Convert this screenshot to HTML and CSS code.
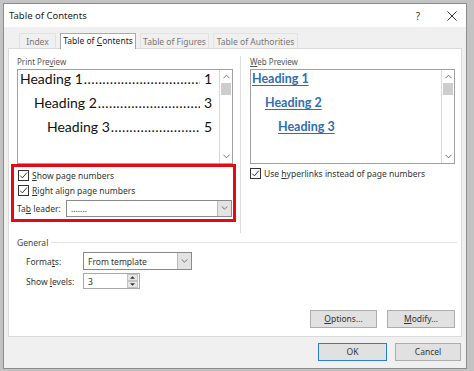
FILE: index.html
```html
<html>
    <head>
        <link rel="stylesheet" href="styles.css">
    </head>
    <body>
        <div class="window">
            <div class="titlebar">
                <span class="title">Table of Contents</span>
                <span class="help">?</span>
                <span class="close_box"><svg class="close" viewBox="0 0 10 10"><path d="M0.5 0.5 L9.5 9.5 M9.5 0.5 L0.5 9.5" stroke="#333" stroke-width="1" fill="none"/></svg></span>
            </div>
            <div class="tabs">
                <div class="tab t_index">Index</div>
                <div class="tab active t_toc">Table of <u>C</u>ontents</div>
                <div class="tab t_fig">Table of Figures</div>
                <div class="tab t_auth">Table of Authorities</div>
            </div>
            <div class="panel">
                <div class="top">
                    <div class="col left">
                        <div class="label">Print Pre<u>v</u>iew</div>
                        <div class="preview">
                            <div class="preview_body">
                                <div class="toc_line lvl1"><span>Heading 1</span><span class="leader"></span><span>1</span></div>
                                <div class="toc_line lvl2"><span>Heading 2</span><span class="leader"></span><span>3</span></div>
                                <div class="toc_line lvl3"><span>Heading 3</span><span class="leader"></span><span>5</span></div>
                            </div>
                            <div class="scrollbar">
                                <svg class="arrow" viewBox="0 0 8 5"><path d="M0.5 4.5 L4 1 L7.5 4.5" stroke="#606060" fill="none"/></svg>
                                <div class="thumb"></div>
                                <div class="spacer"></div>
                                <svg class="arrow" viewBox="0 0 8 5"><path d="M0.5 0.5 L4 4 L7.5 0.5" stroke="#606060" fill="none"/></svg>
                            </div>
                        </div>
                        <div class="highlight">
                            <div class="check_row">
                                <svg class="cb" viewBox="0 0 11 11"><rect x="0.5" y="0.5" width="10" height="10" fill="#fff" stroke="#333"/><path d="M2.2 5.6 L4.4 7.9 L8.9 2.6" fill="none" stroke="#333"/></svg>
                                <span><u>S</u>how page numbers</span>
                            </div>
                            <div class="check_row">
                                <svg class="cb" viewBox="0 0 11 11"><rect x="0.5" y="0.5" width="10" height="10" fill="#fff" stroke="#333"/><path d="M2.2 5.6 L4.4 7.9 L8.9 2.6" fill="none" stroke="#333"/></svg>
                                <span><u>R</u>ight align page numbers</span>
                            </div>
                            <div class="leader_row">
                                <span class="leader_label">Ta<u>b</u> leader:</span>
                                <div class="select leader_select">
                                    <span class="select_text">.......</span>
                                    <div class="drop"><svg viewBox="0 0 8 5"><path d="M0.5 0.5 L4 4 L7.5 0.5" stroke="#555" fill="none"/></svg></div>
                                </div>
                            </div>
                        </div>
                    </div>
                    <div class="col right">
                        <div class="label"><u>W</u>eb Preview</div>
                        <div class="preview web">
                            <div class="preview_body">
                                <div class="web_line lvl1"><span>Heading 1</span></div>
                                <div class="web_line lvl2"><span>Heading 2</span></div>
                                <div class="web_line lvl3"><span>Heading 3</span></div>
                            </div>
                            <div class="scrollbar">
                                <svg class="arrow" viewBox="0 0 8 5"><path d="M0.5 4.5 L4 1 L7.5 4.5" stroke="#606060" fill="none"/></svg>
                                <div class="thumb"></div>
                                <div class="spacer"></div>
                                <svg class="arrow" viewBox="0 0 8 5"><path d="M0.5 0.5 L4 4 L7.5 0.5" stroke="#606060" fill="none"/></svg>
                            </div>
                        </div>
                        <div class="check_row web_check">
                            <svg class="cb" viewBox="0 0 11 11"><rect x="0.5" y="0.5" width="10" height="10" fill="#fff" stroke="#333"/><path d="M2.2 5.6 L4.4 7.9 L8.9 2.6" fill="none" stroke="#333"/></svg>
                            <span>Use <u>h</u>yperlinks instead of page numbers</span>
                        </div>
                    </div>
                </div>
                <div class="general">
                    <div class="group_title"><span>General</span></div>
                    <div class="field_row">
                        <span class="field_label">Forma<u>t</u>s:</span>
                        <div class="select formats_select">
                            <span class="select_text">From template</span>
                            <div class="drop"><svg viewBox="0 0 8 5"><path d="M0.5 0.5 L4 4 L7.5 0.5" stroke="#555" fill="none"/></svg></div>
                        </div>
                    </div>
                    <div class="field_row">
                        <span class="field_label">Show <u>l</u>evels:</span>
                        <div class="spin">
                            <span class="select_text">3</span>
                            <div class="spin_btns">
                                <div class="spin_btn"><svg viewBox="0 0 6 3"><path d="M0 3 L3 0 L6 3 Z" fill="#333"/></svg></div>
                                <div class="spin_btn"><svg viewBox="0 0 6 3"><path d="M0 0 L3 3 L6 0 Z" fill="#333"/></svg></div>
                            </div>
                        </div>
                    </div>
                </div>
                <div class="panel_buttons">
                    <div class="button b_options"><u>O</u>ptions...</div>
                    <div class="button b_modify"><u>M</u>odify...</div>
                </div>
            </div>
            <div class="footer">
                <div class="button default b_ok">OK</div>
                <div class="button b_cancel">Cancel</div>
            </div>
        </div>
    </body>
</html>
```

FILE: styles.css
```css
body
{
    margin:0;
    padding:3px 0 0 3px;
    background:#c3c3c3;
    font-family:"Noto Sans","Open Sans",sans-serif;
    font-size:8.5px;
    color:#333;
}
u
{
    text-decoration:underline;
    text-underline-offset:1px;
}
.window
{
    width:462px;
    height:364px;
    border:1px solid #8c8c8c;
    background:#f0f0f0;
    display:flex;
    flex-direction:column;
}
.titlebar
{
    height:23px;
    background:#fff;
    display:flex;
    align-items:center;
    padding-left:5px;
}
.title
{
    font-size:9.5px;
    color:#222;
}
.help
{
    margin-left:auto;
    margin-right:18px;
    font-size:10px;
    color:#333;
}
.close_box
{
    width:28px;
    display:flex;
    justify-content:center;
}
.close
{
    width:10px;
    height:10px;
}
.tabs
{
    height:21px;
    display:flex;
    align-items:flex-end;
    padding-left:15px;
    gap:4px;
}
.tab
{
    height:15px;
    line-height:15px;
    text-align:center;
    color:#777;
    border:1px solid #e2e2e2;
    border-bottom:none;
    box-sizing:border-box;
}
.tab.active
{
    height:16px;
    line-height:14px;
    background:#fff;
    color:#222;
    border:1px solid #a9a9a9;
    border-bottom:none;
    margin-bottom:-1px;
    position:relative;
}
.t_index { width:37px; }
.t_toc { width:76px; }
.t_fig { width:69px; }
.t_auth { width:85px; }
.panel
{
    margin:0 4px;
    height:287px;
    background:#fff;
    border:1px solid #dadada;
    display:flex;
    flex-direction:column;
}
.top
{
    margin-top:7px;
    height:177px;
    display:flex;
}
.col.left
{
    width:223px;
    padding-left:8px;
    border-right:1px solid #dcdcdc;
}
.col.right
{
    padding-left:9px;
}
.label
{
    height:12px;
    line-height:12px;
    margin-bottom:1px;
    font-size:8px;
    color:#555;
}
.preview
{
    width:216px;
    height:95px;
    box-sizing:border-box;
    border:1px solid #a0a0a0;
    display:flex;
}
.preview.web
{
    width:205px;
}
.preview_body
{
    flex:1;
    min-width:0;
    padding-right:7px;
    border-right:1px solid #d8d8d8;
}
.toc_line
{
    display:flex;
    height:24px;
    line-height:18px;
    font-family:Lato,"Noto Sans",sans-serif;
    font-size:14px;
    color:#111;
}
.toc_line.lvl1 { padding-left:2px; }
.toc_line.lvl2 { padding-left:16px; }
.toc_line.lvl3 { padding-left:29px; }
.leader
{
    flex:1;
    min-width:0;
    overflow:hidden;
    white-space:nowrap;
    letter-spacing:0.4px;
    margin:0 4px 0 1px;
}
.leader::before
{
    content:"................................................................................";
}
.web_line
{
    height:24px;
    line-height:18px;
    font-family:Lato,"Noto Sans",sans-serif;
    font-size:12.5px;
    font-weight:bold;
    color:#2f6eb3;
}
.web_line span
{
    text-decoration:underline;
    text-underline-offset:2px;
}
.web_line.lvl1 { padding-left:1px; }
.web_line.lvl2 { padding-left:14px; }
.web_line.lvl3 { padding-left:27px; }
.scrollbar
{
    width:12px;
    flex:none;
    display:flex;
    flex-direction:column;
    align-items:center;
    background:#fff;
}
.arrow
{
    width:7px;
    height:5px;
    margin:4px 0;
}
.thumb
{
    width:10px;
    height:12px;
    background:#cdcdcd;
}
.spacer
{
    flex:1;
}
.highlight
{
    margin-left:-6px;
    width:225px;
    height:58px;
    box-sizing:border-box;
    border:3px solid #e20a17;
    padding:1px 0 0 4px;
}
.check_row
{
    height:15px;
    display:flex;
    align-items:center;
    gap:3px;
}
.cb
{
    width:11px;
    height:11px;
    flex:none;
}
.web_check
{
    margin-top:2px;
}
.leader_row
{
    display:flex;
    align-items:center;
    height:20px;
    margin-left:-1px;
}
.leader_label
{
    width:49px;
}
.select
{
    display:flex;
    align-items:center;
    box-sizing:border-box;
    border:1px solid #8a8a8a;
    background:#fff;
}
.leader_select
{
    width:166px;
    height:17px;
}
.select_text
{
    flex:1;
    padding-left:4px;
}
.drop
{
    width:13px;
    height:100%;
    background:#e3e3e3;
    border-left:1px solid #b8b8b8;
    display:flex;
    align-items:center;
    justify-content:center;
}
.drop svg
{
    width:7px;
    height:4px;
}
.general
{
    margin-top:3px;
    padding-left:8px;
}
.group_title
{
    display:flex;
    align-items:center;
    height:12px;
    color:#444;
}
.group_title::after
{
    content:"";
    flex:1;
    height:1px;
    background:#e2e2e2;
    margin:0 4px 0 3px;
}
.field_row
{
    display:flex;
    align-items:center;
    padding-left:9px;
    margin-top:4px;
}
.field_row + .field_row
{
    margin-top:3px;
}
.field_label
{
    width:57px;
}
.formats_select
{
    width:109px;
    height:18px;
}
.spin
{
    width:57px;
    height:16px;
    display:flex;
    align-items:center;
    box-sizing:border-box;
    border:1px solid #a8a8a8;
}
.spin_btns
{
    width:11px;
    height:100%;
    display:flex;
    flex-direction:column;
    margin-right:1px;
}
.spin_btn
{
    flex:1;
    display:flex;
    align-items:center;
    justify-content:center;
    background:#e6e6e6;
    border:1px solid #c4c4c4;
    box-sizing:border-box;
}
.spin_btn svg
{
    width:5px;
    height:3px;
}
.panel_buttons
{
    margin-top:auto;
    margin-bottom:8px;
    display:flex;
    justify-content:flex-end;
    gap:10px;
    padding-right:6px;
}
.button
{
    height:18px;
    box-sizing:border-box;
    line-height:16px;
    text-align:center;
    background:#e1e1e1;
    border:1px solid #adadad;
    color:#333;
}
.b_options { width:67px; }
.b_modify { width:68px; }
.footer
{
    margin-top:6px;
    display:flex;
    justify-content:flex-end;
    gap:8px;
    padding-right:5px;
}
.button.default
{
    border:1px solid #2a7fd4;
}
.b_ok { width:69px; }
.b_cancel { width:66px; }
```
